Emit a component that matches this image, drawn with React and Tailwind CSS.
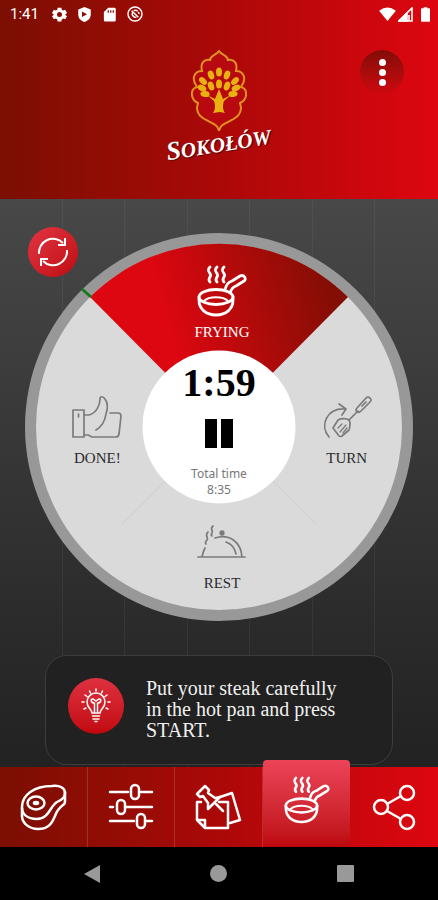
import React, { useState } from 'react';

const RED_BAR = 'bg-linear-to-r from-[#7b0e02] via-[#ab0808] to-[#de0610]';
const SERIF = "font-['Liberation_Serif',serif]";

const PanIcon = ({ className }) => (
  <svg viewBox="0 0 50 52" className={className} fill="none" stroke="currentColor" strokeWidth="2.800" strokeLinecap="round" strokeLinejoin="round" aria-hidden="true">
    <path d="M13 2c-5 5 3 6 0 10-1 2-2 3 0 5M20 2c-5 5 3 6 0 10-1 2-2 3 0 5M27 2c-5 5 3 6 0 10-1 2-2 3 0 5" />
    <ellipse cx="19" cy="32" rx="17" ry="7.500" />
    <path d="M2 32v3c0 9 7 15 17 15s17-6 17-15v-3" />
    <path d="M7 36c5-5 19-5 24 0" strokeWidth="2" />
    <path d="M28 25c1-5 3-8 7-9l8-5c4-2 7 3 4 5l-8 5c-4 1-5 4-6 7" />
  </svg>
);

const ThumbIcon = () => (
  <svg viewBox="0 0 50 44" className="w-[50px] h-[44px]" fill="none" stroke="currentColor" strokeWidth="1.700" strokeLinecap="round" strokeLinejoin="round" aria-hidden="true">
    <path d="M1 15h11v27H1zM6.500 19v3" />
    <path d="M12 20h5c7-2 11-9 11-16 0-3 3-3 5 0 3 4 3 9 1 15-1 7-5 13-10 16" />
    <path d="M38 18h8q3 0 3 3l-2 18q-.5 3-3 3H20l-4-2h-4" />
  </svg>
);

const SpatulaIcon = () => (
  <svg viewBox="0 0 50 44" className="w-[50px] h-[44px]" fill="none" stroke="currentColor" strokeWidth="1.700" strokeLinecap="round" strokeLinejoin="round" aria-hidden="true">
    <path d="M7 42C-3 30 5 13 23 14M17 9l7 5-4 6" />
    <path d="M11 33l5-8q4-2 9-1 3 1 3 4 0 4-1 7l-7 6q-2 1-3 0z" />
    <path d="M16 33l4-4M18 37l6-7M21 38l4-5" strokeWidth="1.300" />
    <path d="M27 25l9-9M35 17q-2-2 0-4L44 3q2-2 4 0t0 4L39 16q-2 2-4 1zM40 11l4-4" />
  </svg>
);

const ClocheIcon = () => (
  <svg viewBox="0 0 50 36" className="w-[50px] h-[36px]" fill="none" stroke="currentColor" strokeWidth="1.700" strokeLinecap="round" strokeLinejoin="round" aria-hidden="true">
    <path d="M1 33h47M5 33q1-5 3-9M18 14c14-5 26 4 27 19M29 18c6 2 9 7 10 12" />
    <path d="M11 8c-4 4 1 5-1 8-1 1-2 3-1 4M16 2c-4 3 1 5-1 7-1 1-1 2 0 3" />
    <circle cx="25" cy="9" r="1.800" fill="currentColor" />
  </svg>
);

const RefreshIcon = () => (
  <svg viewBox="0 0 32 32" className="w-8 h-8" fill="none" stroke="currentColor" strokeWidth="2" aria-hidden="true">
    <path d="M2 18A14 14 0 0 1 26 7M30 14A14 14 0 0 1 6 25" />
    <path d="M28 2v7h-7M4 30v-7h7" />
  </svg>
);

const BulbIcon = () => (
  <svg viewBox="0 0 30 36" className="w-[30px] h-9" fill="none" stroke="currentColor" strokeWidth="1.500" strokeLinecap="round" aria-hidden="true">
    <path d="M11 25c0-4-5-5-5-11a9 9 0 0 1 18 0c0 6-5 7-5 11zM11.500 28h7M12 31h6M14 33.500h2" />
    <path d="M13.500 24V15M16.500 24V15M13.500 15c-4 0-4-4-2-4s2 2 3.500 2 1.500-2 3.500-2 2 4-2 4" />
    <path d="M15 1v2M8.500 3l1 2M21.500 3l-1 2M4 7l2 1.500M26 7l-2 1.500M1 14h2M29 14h-2M3 21l2-1M27 21l-2-1" />
  </svg>
);

const Icon48 = ({ children }) => (
  <svg viewBox="0 0 48 48" className="w-12 h-12" fill="none" stroke="currentColor" strokeWidth="2.500" strokeLinejoin="round" strokeLinecap="round" aria-hidden="true">
    {children}
  </svg>
);

const SteakIcon = () => (
  <Icon48>
    <path d="M3 24C3 12 15 3 33 3c8-1 13 2 13 7s-4 7-8 9c-7 4-8 17-20 17C8 36 3 31 3 24z" />
    <path d="M3 25v8c0 7 7 13 16 13 11 0 14-6 17-13 2-6 4-8 8-11q2-1 2-4V9" />
    <ellipse cx="17" cy="20" rx="8.500" ry="6.500" />
    <ellipse cx="17" cy="20" rx="2" ry="1" />
  </Icon48>
);

const SlidersIcon = () => (
  <Icon48>
    <path d="M3 9h18M34 9h11M3 24h3M19 24h26M3 38h24M40 38h5" />
    <rect x="24" y="2" width="8" height="14" rx="4" />
    <rect x="10" y="17" width="8" height="14" rx="4" />
    <rect x="30" y="31" width="8" height="14" rx="4" />
  </Icon48>
);

const NotesIcon = () => (
  <Icon48>
    <path d="M7 19H3v18l8 8h23V19h-9M3 37h8v8" />
    <path d="M26 14l12-4 8 27-10 3" />
    <path d="M3 11l8-8 4 4-1 3 7 5 5-1-12 12v-6l-5-7-3 1zM21 20l8 8" />
  </Icon48>
);

const ShareIcon = () => (
  <Icon48>
    <circle cx="11" cy="24" r="7" />
    <circle cx="37" cy="10" r="7" />
    <circle cx="37" cy="39" r="7" />
    <path d="M17 21l14-8M17 28l14 8" />
  </Icon48>
);

// positions of the leaves on the logo tree: x, y, rotation
const LEAVES = [
  [28, 22, 0], [20, 25, -20], [36, 25, 20], [12, 31, -45], [44, 31, 45],
  [28, 34, 0], [20, 36, -20], [36, 36, 20], [11, 38, -65], [45, 38, 65],
  [14, 44, -85], [42, 44, 85],
];

const Logo = () => (
  <div className="flex flex-col items-center">
    <svg viewBox="0 0 56 82" className="w-[56px] h-[82px]" fill="none" aria-hidden="true">
      <path
        d="M28 81C27 70 7 73 6 58c0-2 1-4 1-5C-1 49-1 39 6 37 0 29 3 21 11 21 9 13 13 9 19 10c1-6 6-4 9-9 3 5 8 3 9 9 6-1 10 3 8 11 8 0 11 8 5 16 7 2 7 12-1 16 0 1 1 3 1 5-1 15-21 12-22 23z"
        fill="#b7090f"
        stroke="#df9220"
        strokeWidth="2"
      />
      {LEAVES.map(([x, y, r]) => (
        <ellipse key={`${x}-${y}`} cx={x} cy={y} rx="3" ry="4.600" fill="#e8b010" transform={`rotate(${r} ${x} ${y})`} />
      ))}
      <path d="M22 63c3-4 2-9 1-12l-7-6 8 4 4-10 4 10 8-4-7 6c-1 3-2 8 1 12l-5-1z" fill="#e8b010" />
    </svg>
    <div className={`${SERIF} block -rotate-9 font-bold italic text-white text-[21px] leading-6 first-letter:text-[26px] whitespace-nowrap [text-shadow:1px_1px_1px_#4a0505]`}>
      SOKOŁÓW
    </div>
  </div>
);

const StatusBar = () => (
  <div className="flex items-center justify-between h-7 pl-[10px] pr-2 text-white">
    <div className="flex items-center gap-[10px]">
      <span className="font-['Roboto',sans-serif] text-[15px] leading-5 mr-[3px]">1:41</span>
      <svg viewBox="0 0 24 24" className="w-[15px] h-[15px]" fill="currentColor" aria-hidden="true">
        <path fillRule="evenodd" d="M9 1h6l.6 3.400 2.200 1.300L21 4.500l3 5-2.600 2.300v.8l2.600 2.100-3 5-3.200-1.200-2.200 1.300L15 23H9l-.6-3.200-2.200-1.300L3 19.700l-3-5 2.600-2.100v-.8L0 9.500l3-5 3.200 1.200 2.200-1.300zM12 8a4 4 0 1 0 0 8 4 4 0 0 0 0-8z" />
      </svg>
      <svg viewBox="0 0 24 24" className="w-[15px] h-[15px]" fill="currentColor" aria-hidden="true">
        <path fillRule="evenodd" d="M12 0l10 4v8c0 6-4 10-10 12C6 22 2 18 2 12V4zM8 7v9l8-4.500z" />
      </svg>
      <svg viewBox="0 0 24 24" className="w-[15px] h-[15px]" fill="currentColor" aria-hidden="true">
        <path fillRule="evenodd" d="M10 1h10q2 0 2 2v18q0 2-2 2H5q-2 0-2-2V8zM9 5v4h2V5zm4 0v4h2V5zm4 0v4h2V5z" />
      </svg>
      <svg viewBox="0 0 24 24" className="w-4 h-4" fill="none" stroke="currentColor" strokeWidth="2.200" aria-hidden="true">
        <circle cx="12" cy="12" r="10.500" />
        <path d="M7 7l10 10M16 8a5.500 5.500 0 0 0-6-1M18 12a6 6 0 0 0-1-3M8 10a5.500 5.500 0 0 0 6 7" />
      </svg>
    </div>
    <div className="flex items-center gap-[2px]">
      <svg viewBox="0 0 18 15" className="w-[17px] h-[14px]" fill="currentColor" aria-hidden="true">
        <path d="M0 4Q9-3 18 4L9 15z" />
      </svg>
      <svg viewBox="0 0 15 15" className="w-[15px] h-[15px] mr-[6px]" fill="none" stroke="currentColor" strokeWidth="1.600" aria-hidden="true">
        <path d="M14 1v13H1zM11 8v6" />
        <path d="M1 14L9 6v8z" fill="currentColor" />
      </svg>
      <svg viewBox="0 0 10 16" className="w-[9px] h-[15px]" fill="currentColor" aria-hidden="true">
        <path d="M3 0h4v1h2q1 0 1 1v13q0 1-1 1H1q-1 0-1-1V2q0-1 1-1h2z" />
      </svg>
    </div>
  </div>
);

const Stage = ({ icon, label, className }) => (
  <div className={`flex flex-col items-center justify-end gap-[5px] pb-6 ${className}`}>
    {icon}
    <span className={`${SERIF} text-[15px] leading-5`}>{label}</span>
  </div>
);

const Dial = ({ paused, onToggle }) => (
  <div className="relative w-full max-w-[480px] mx-auto aspect-square">
    <svg viewBox="0 0 388 388" className="block w-full h-full" aria-hidden="true">
      <defs>
        <linearGradient id="active" x1="0" x2="1" y1="0.200" y2="0">
          <stop offset="0.250" stopColor="#dc0710" />
          <stop offset="0.900" stopColor="#820e04" />
        </linearGradient>
      </defs>
      <circle cx="194" cy="194" r="194" fill="#989898" />
      <circle cx="194" cy="194" r="183" fill="#dadada" />
      <path d="M194 194L65 64A183 183 0 0 1 323 64z" fill="url(#active)" />
      <path d="M140 248l-43 43M248 248l43 43" stroke="#cfcfcf" strokeWidth="1" />
      <path d="M57 56l9 8" stroke="#157a1c" strokeWidth="3" />
      <circle cx="194" cy="194" r="76.500" fill="#fff" />
    </svg>
    <div className="absolute inset-0 grid grid-cols-3 grid-rows-3 pt-2 pb-1 pl-[10px] pr-1 text-[#2b2b2b]">
      <Stage className="col-start-2 row-start-1 text-white" label="FRYING" icon={<PanIcon className="w-[50px] h-[52px]" />} />
      <Stage className="col-start-1 row-start-2" label="DONE!" icon={<span className="text-[#7b7b7b] mb-1"><ThumbIcon /></span>} />
      <Stage className="col-start-3 row-start-2" label="TURN" icon={<span className="text-[#7b7b7b] mb-1"><SpatulaIcon /></span>} />
      <Stage className="col-start-2 row-start-3" label="REST" icon={<span className="text-[#7b7b7b] mb-2"><ClocheIcon /></span>} />
    </div>
    <div className="absolute inset-0 m-auto w-[153px] h-[153px] flex flex-col items-center pt-3">
      <span className={`${SERIF} font-bold text-[40px] leading-10 text-black`}>1:59</span>
      <button type="button" onClick={onToggle} aria-label={paused ? 'Start' : 'Pause'} className="mt-4 text-black">
        <svg viewBox="0 0 30 29" className="w-[30px] h-[29px]" fill="currentColor" aria-hidden="true">
          {paused ? <path d="M3 0l25 14.500L3 29z" /> : <path d="M1 0h12v29H1zM17 0h12v29H17z" />}
        </svg>
      </button>
      <div className="mt-[18px] text-center font-['Noto_Sans',sans-serif] text-[12px] leading-4 text-[#777]">
        <p>Total time</p>
        <p>8:35</p>
      </div>
    </div>
  </div>
);

const TABS = [
  { id: 'steak', label: 'Steak', icon: <SteakIcon /> },
  { id: 'settings', label: 'Settings', icon: <SlidersIcon /> },
  { id: 'notes', label: 'Notes', icon: <NotesIcon /> },
  { id: 'frying', label: 'Frying', icon: <PanIcon className="w-[46px] h-12" /> },
  { id: 'share', label: 'Share', icon: <ShareIcon /> },
];

const TabBar = ({ active, onChange }) => (
  <nav className={`relative grid grid-cols-5 h-20 ${RED_BAR}`}>
    {TABS.map((tab) => (
      <button
        key={tab.id}
        type="button"
        aria-label={tab.label}
        onClick={() => onChange(tab.id)}
        className={
          tab.id === active
            ? 'flex items-center justify-center -mt-[7px] pb-[7px] rounded-t bg-linear-to-b from-[#ec4358] to-[#bd060b] text-white'
            : 'flex items-center justify-center border-r border-white/15 last:border-r-0 text-white'
        }
      >
        {tab.icon}
      </button>
    ))}
  </nav>
);

const SystemBar = () => (
  <div className="grid grid-cols-3 items-center justify-items-center h-[53px] px-[29px] bg-black text-[#999]">
    <button type="button" aria-label="Back">
      <svg viewBox="0 0 18 18" className="w-[18px] h-[18px]" fill="currentColor" aria-hidden="true">
        <path d="M17 0v18L1 9z" />
      </svg>
    </button>
    <button type="button" aria-label="Home" className="w-[17px] h-[17px] rounded-full bg-[#999]" />
    <button type="button" aria-label="Recent" className="w-[17px] h-[17px] rounded-[1px] bg-[#999]" />
  </div>
);

const App = () => {
  const [activeTab, setActiveTab] = useState('frying');
  const [paused, setPaused] = useState(false);

  return (
    <div className="flex flex-col min-h-screen bg-black">
      <header className={`h-[199px] ${RED_BAR}`}>
        <StatusBar />
        <div className="grid grid-cols-[1fr_auto_1fr] items-start px-[34px] pt-[22px]">
          <div className="col-start-2">
            <Logo />
          </div>
          <button
            type="button"
            aria-label="Menu"
            className="justify-self-end flex flex-col items-center justify-center gap-[3px] w-11 h-11 rounded-full bg-linear-to-b from-[#820c07] to-[#cf0810]"
          >
            <span className="w-[7px] h-[7px] rounded-full bg-white" />
            <span className="w-[7px] h-[7px] rounded-full bg-white" />
            <span className="w-[7px] h-[7px] rounded-full bg-white" />
          </button>
        </div>
      </header>

      <main className="relative flex-1 px-[25px] pt-[34px] pb-[2px] bg-linear-to-b from-[#484848] to-[#222]">
        <div className="absolute inset-0 grid grid-cols-7" aria-hidden="true">
          {[1, 2, 3, 4, 5, 6].map((n) => (
            <div key={n} className="border-r border-white/5" />
          ))}
        </div>
        <Dial paused={paused} onToggle={() => setPaused(!paused)} />
        <button
          type="button"
          aria-label="Restart"
          onClick={() => setPaused(false)}
          className="absolute left-7 top-7 flex items-center justify-center w-[50px] h-[50px] rounded-full bg-linear-to-br from-[#e23442] to-[#bf060c] text-white"
        >
          <RefreshIcon />
        </button>
        <section className="relative flex items-start mt-[34px] mx-5 h-[110px] pt-[22px] pl-[22px] pr-6 rounded-[22px] border border-[#3d3d3d] bg-[#212121]">
          <div className="flex shrink-0 items-center justify-center w-14 h-14 mr-[22px] rounded-full bg-linear-to-b from-[#dd2f3e] to-[#c2060c] text-white">
            <BulbIcon />
          </div>
          <p className={`${SERIF} max-w-[200px] text-[20px] leading-[21px] text-[#f0f0f0]`}>
            Put your steak carefully in the hot pan and press START.
          </p>
        </section>
      </main>

      <TabBar active={activeTab} onChange={setActiveTab} />
      <SystemBar />
    </div>
  );
};

export default App;
